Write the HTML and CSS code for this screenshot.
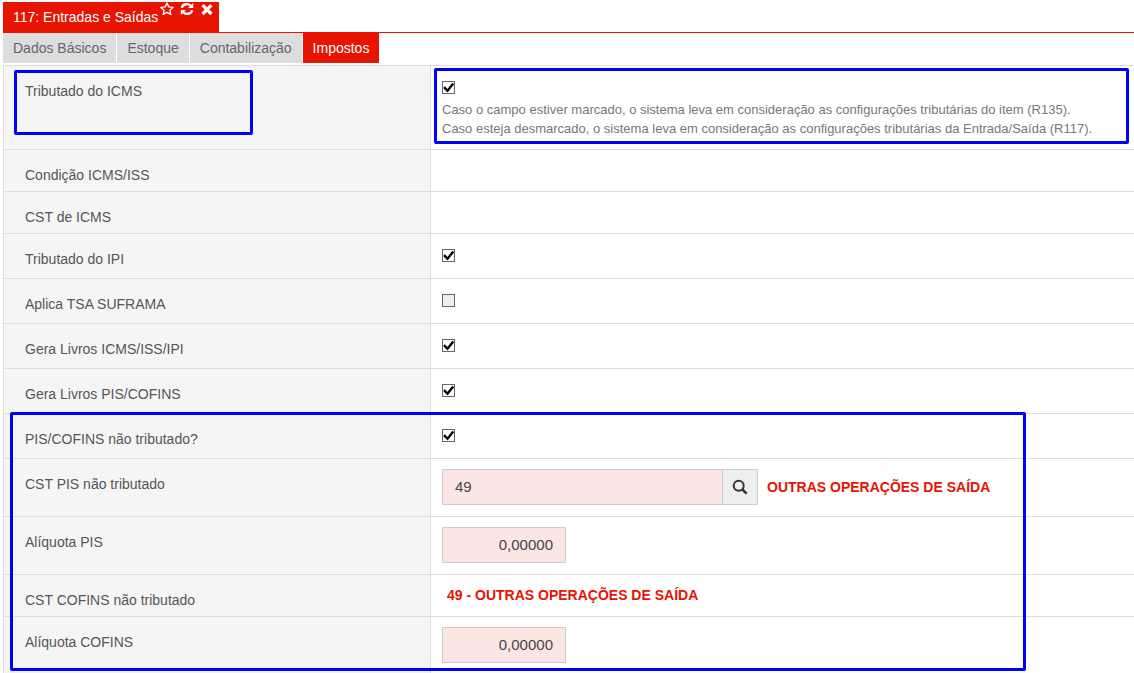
FILE: index.html
```html
<!DOCTYPE html>
<html lang="pt-BR">

<head>
  <meta charset="UTF-8">
  <meta name="viewport" content="width=device-width, initial-scale=1.0">
  <title>117: Entradas e Saídas</title>
  <link rel="stylesheet" href="styles.css">
</head>

<body>
  <header class="header">
    <div class="window-title">
      <h1>117: Entradas e Saídas</h1>
      <div class="window-actions">
        <button type="button" class="icon-btn" aria-label="Favoritar">
          <svg width="14" height="14" viewBox="0 0 14 14" fill="none" stroke="currentColor" stroke-width="1.4" stroke-linejoin="round">
            <path d="M7 1 L8.8 4.9 L13.1 5.4 L9.9 8.3 L10.8 12.5 L7 10.4 L3.2 12.5 L4.1 8.3 L0.9 5.4 L5.2 4.9 Z" />
          </svg>
        </button>
        <button type="button" class="icon-btn" aria-label="Atualizar">
          <svg width="14" height="14" viewBox="0 0 14 14">
            <path d="M1.8 5.8 A5.2 4.8 0 0 1 10.8 3.8 M12.2 8.2 A5.2 4.8 0 0 1 3.2 10.2" fill="none" stroke="currentColor" stroke-width="2.4" />
            <path d="M13.2 1 V6 H8 Z M0.8 13 V8 H6 Z" fill="currentColor" />
          </svg>
        </button>
        <button type="button" class="icon-btn" aria-label="Fechar">
          <svg width="14" height="14" viewBox="0 0 14 14" fill="none" stroke="currentColor" stroke-width="3.2">
            <path d="M2.6 3.2 L11.4 12 M11.4 3.2 L2.6 12" />
          </svg>
        </button>
      </div>
    </div>
  </header>

  <nav class="tabs">
    <a href="#dados" class="tab">Dados Básicos</a>
    <a href="#estoque" class="tab">Estoque</a>
    <a href="#contabilizacao" class="tab">Contabilização</a>
    <a href="#impostos" class="tab active">Impostos</a>
  </nav>

  <form class="form">
    <div class="row row-help">
      <div class="label marked"><label for="icms">Tributado do ICMS</label></div>
      <div class="field marked">
        <input type="checkbox" class="check" id="icms" checked>
        <p class="help">Caso o campo estiver marcado, o sistema leva em consideração as configurações tributárias do item (R135).<br>Caso esteja desmarcado, o sistema leva em consideração as configurações tributárias da Entrada/Saída (R117).</p>
      </div>
    </div>
    <div class="row">
      <div class="label">Condição ICMS/ISS</div>
      <div class="field"></div>
    </div>
    <div class="row">
      <div class="label">CST de ICMS</div>
      <div class="field"></div>
    </div>
    <div class="row row-check">
      <div class="label"><label for="ipi">Tributado do IPI</label></div>
      <div class="field"><input type="checkbox" class="check" id="ipi" checked></div>
    </div>
    <div class="row row-check">
      <div class="label"><label for="suframa">Aplica TSA SUFRAMA</label></div>
      <div class="field"><input type="checkbox" class="check" id="suframa" disabled></div>
    </div>
    <div class="row row-check">
      <div class="label"><label for="livrosIcms">Gera Livros ICMS/ISS/IPI</label></div>
      <div class="field"><input type="checkbox" class="check" id="livrosIcms" checked></div>
    </div>
    <div class="row row-check">
      <div class="label"><label for="livrosPis">Gera Livros PIS/COFINS</label></div>
      <div class="field"><input type="checkbox" class="check" id="livrosPis" checked></div>
    </div>

    <div class="group marked">
      <div class="row row-check">
        <div class="label"><label for="naoTributado">PIS/COFINS não tributado?</label></div>
        <div class="field"><input type="checkbox" class="check" id="naoTributado" checked></div>
      </div>
      <div class="row row-input">
        <div class="label"><label for="cstPis">CST PIS não tributado</label></div>
        <div class="field">
          <div class="lookup">
            <input type="text" class="input" id="cstPis" value="49">
            <button type="button" class="search-btn" aria-label="Pesquisar">
              <svg width="16" height="16" viewBox="0 0 16 16" fill="none" stroke="currentColor">
                <circle cx="6.7" cy="6.7" r="5" stroke-width="2" />
                <path d="M10.3 10.3 L14.6 14.6" stroke-width="2.6" />
              </svg>
            </button>
          </div>
          <span class="description">OUTRAS OPERAÇÕES DE SAÍDA</span>
        </div>
      </div>
      <div class="row row-input">
        <div class="label"><label for="aliqPis">Alíquota PIS</label></div>
        <div class="field"><input type="text" class="input number" id="aliqPis" value="0,00000"></div>
      </div>
      <div class="row">
        <div class="label">CST COFINS não tributado</div>
        <div class="field"><span class="description static">49 - OUTRAS OPERAÇÕES DE SAÍDA</span></div>
      </div>
      <div class="row row-input">
        <div class="label"><label for="aliqCofins">Alíquota COFINS</label></div>
        <div class="field"><input type="text" class="input number" id="aliqCofins" value="0,00000"></div>
      </div>
    </div>
  </form>
</body>

</html>
```
FILE: styles.css
```css
*,
*::after {
  margin: 0;
  padding: 0;
  box-sizing: border-box;
}

body {
  background-color: #fff;
  color: #555;
  font-family: "Liberation Sans", Arial, sans-serif;
  font-size: 14px;
  line-height: 20px;
  padding: 2px 0 0 3px;
}

.header {
  display: flex;
  border-bottom: 1px solid #e61400;
}

.window-title {
  display: flex;
  gap: 2px;
  height: 30px;
  padding: 0 5px 0 10px;
  background-color: #e61400;
  color: #fff;
}

.window-title h1 {
  font-size: 14px;
  font-weight: normal;
  line-height: 30px;
}

.window-actions {
  display: flex;
  gap: 6px;
  height: 14px;
}

.icon-btn {
  width: 14px;
  height: 14px;
  border: none;
  background: none;
  color: #fff;
  cursor: pointer;
}

.icon-btn svg {
  display: block;
}

.tabs {
  display: flex;
  gap: 1px;
  margin-bottom: 2px;
}

.tab {
  padding: 0 10px;
  background-color: #ddd;
  color: #666;
  line-height: 30px;
  text-decoration: none;
}

.tab.active {
  background-color: #e61400;
  color: #fff;
}

.form {
  border-left: 1px solid #ddd;
}

.row {
  display: flex;
  min-height: 42px;
  border-top: 1px solid #ddd;
}

.row-help {
  min-height: 84px;
}

.row-check {
  min-height: 45px;
}

.row-input {
  min-height: 58px;
}

.label {
  flex: 0 0 427px;
  padding: 15px 21px 0;
  border-right: 1px solid #ddd;
  background-color: #f5f5f5;
}

.field {
  flex: 1;
  display: flex;
  align-items: flex-start;
  gap: 9px;
  padding: 10px 11px 0;
}

.row-help .field {
  flex-direction: column;
  gap: 6px;
  padding-top: 15px;
}

.row-check .field {
  padding-top: 15px;
}

.help {
  color: #777;
  font-size: 13px;
  line-height: 19px;
}

.check {
  appearance: none;
  width: 13px;
  height: 13px;
  border: 1px solid #666;
  background-color: #fff;
}

.check:checked {
  background-image: url("data:image/svg+xml,%3Csvg xmlns='http://www.w3.org/2000/svg' viewBox='0 0 11 11'%3E%3Cpath d='M1 5.2 L4.5 8.8 L10.3 1.4' fill='none' stroke='%23000' stroke-width='2.4'/%3E%3C/svg%3E");
}

.check:disabled {
  background-color: #eee;
}

.input {
  height: 36px;
  padding: 0 12px 2px;
  border: 1px solid #ccc;
  background-color: #fce6e3;
  color: #444;
  font-family: inherit;
  font-size: 15px;
}

.number {
  width: 124px;
  text-align: right;
}

.lookup {
  display: flex;
  width: 316px;
}

.lookup .input {
  flex: 1;
  min-width: 0;
  border-right: none;
}

.search-btn {
  display: flex;
  align-items: center;
  justify-content: center;
  width: 36px;
  border: 1px solid #ccc;
  background-color: #eee;
  color: #333;
  cursor: pointer;
}

.description {
  color: #e61400;
  font-weight: bold;
  line-height: 36px;
}

.description.static {
  padding-left: 5px;
  line-height: 20px;
}

/* blue outlines drawn over the highlighted fields */
.marked {
  position: relative;
}

.marked::after {
  content: "";
  position: absolute;
  border: 3px solid #00f;
  border-radius: 2px;
  pointer-events: none;
}

.label.marked::after {
  top: 4px;
  left: 10px;
  width: 239px;
  height: 65px;
}

.field.marked::after {
  top: 2px;
  right: 5px;
  bottom: 5px;
  left: 3px;
}

.group.marked::after {
  top: -1px;
  right: 108px;
  bottom: 3px;
  left: 6px;
}
```
